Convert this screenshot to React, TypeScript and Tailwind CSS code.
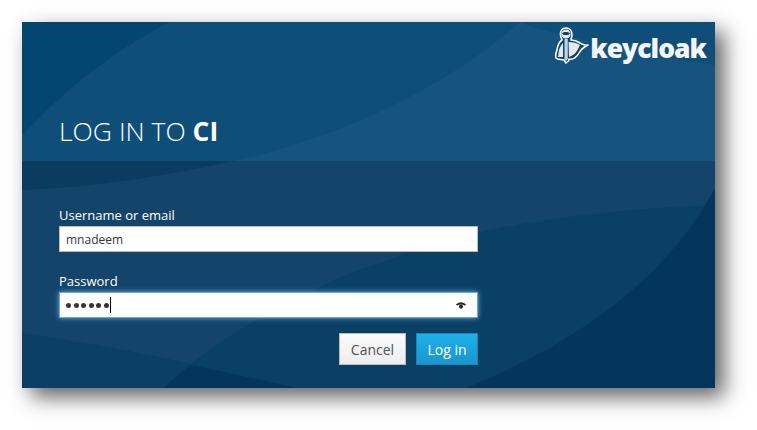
export default function App() {
  return (
    <div className="w-[757px] h-[430px] bg-white pl-[22px] pt-[22px] overflow-hidden" style={{ fontFamily: '"Open Sans", sans-serif' }}>
      <div className="relative w-[693px] h-[366px] bg-[#03466f] shadow-[9px_9px_20px_rgba(0,0,0,0.62)]">
        <svg className="absolute inset-0" width="693" height="366" viewBox="22 22 693 366">
          <rect x="22" y="22" width="693" height="139" fill="#03466f" />
          <path d="M22 135 C70 85 115 50 170 22 L715 22 L715 161 L22 161 Z" fill="#0e4e79" />
          <path d="M300 143 C385 115 460 75 520 22 L535 28 C590 42 650 57 715 65 L715 161 L233 161 C258 156 280 150 300 143 Z" fill="#17537f" />
          <rect x="22" y="161" width="693" height="227" fill="#0a3c5f" />
          <path d="M22 190 C100 187 170 175 233 161 L715 161 L715 388 L22 388 Z" fill="#14446a" />
          <path d="M163 388 C215 340 270 310 315 290 C350 270 380 265 408 252 C440 240 470 237 480 232 C540 218 640 207 715 205 L715 388 Z" fill="#0a4063" />
          <path d="M22 333 C110 345 200 365 297 388 L22 388 Z" fill="#0b4064" />
          <path d="M163 388 L190 365 C225 372 260 380 297 388 Z" fill="#03365a" />
          <path d="M466 388 C560 350 660 290 715 188 L715 388 Z" fill="#03365a" />
        </svg>

        <div className="relative flex flex-col h-full">
          <header className="flex flex-col h-[139px] pl-[37px]">
            <div className="flex justify-end items-start h-[50px] pr-[9px] pt-[4px]">
              <svg width="38" height="38" viewBox="2 2 36 38">
                <path d="M15 4 C11 4 9 7 9.5 11 C10 14 11 15 11 16 C8 18 6.5 22 6 26 C5 29 4 31 5 34 C7 36 10 35 13 36 L15 39 L17.5 37 L18 35 C22 36 26 33 28 29 C30 25 33 23 37 21 C33 22 31 20 29 19 C26 17 23 16 20 16 C20 14 21 13 21 11 C21 7 19 4 15 4 Z" fill="#0d4468" stroke="#ffffff" strokeWidth="1.6" strokeLinejoin="round" />
                <path d="M17.5 18 C22 18 26 19 29 21 C27 25 25 31 18 33 Z" fill="#e4e8eb" />
                <path d="M8 26 C9 23 10 21 12 19 L12 33 L7 33 Z" fill="#e4e8eb" />
                <circle cx="15" cy="10" r="4.6" fill="#e4e9ec" />
                <path d="M11 9 C13 7.5 17 7.5 19 9 L17.5 11 L12.5 11 Z" fill="#0d4468" />
                <path d="M13.5 15 L16.8 15 L16.8 35 L15 37 L13.5 35 Z" fill="#b9d3e4" />
              </svg>
              <span className="text-[26.5px] leading-[40px] mt-[2px] font-extrabold text-[#f4f5f6] tracking-[-1px]">keycloak</span>
            </div>
            <h1 className="mt-[42px] text-[26.5px] leading-[34px] font-light text-white uppercase">
              Log in to <strong className="font-bold">CI</strong>
            </h1>
          </header>

          <form className="flex flex-col w-[456px] pl-[37px] pt-[44px]">
            <label className="text-[13px] leading-[20px] text-white mb-px">Username or email</label>
            <div className="flex items-center h-[26px] bg-white border border-[#bbbbbb] px-[6px] pt-px text-[12px] text-[#363636]">mnadeem</div>

            <label className="mt-[19px] text-[13px] leading-[20px] text-white mb-px">Password</label>
            <div className="relative flex items-center h-[26px] bg-white border border-[#66a8dc] pl-[6px] pr-[10px] shadow-[0_0_5px_rgba(122,190,240,0.9)] text-[#363636]">
              <span className="flex gap-[2.5px]">
                {[0, 1, 2, 3, 4, 5].map((i) => (
                  <span key={i} className="w-[5px] h-[5px] rounded-full bg-[#363636]" />
                ))}
              </span>
              <span className="w-px h-[16px] bg-black ml-[1.5px]" />
              <svg className="ml-auto" width="12" height="8" viewBox="0 0 12 8">
                <path d="M0.8 3.8 C3.5 0.4 8.5 0.4 11.2 3.8 L9.6 4.6 C7.5 3 4.5 3 2.4 4.6 Z" fill="#2b2b2b" />
                <circle cx="6" cy="5.6" r="2.1" fill="#2b2b2b" />
              </svg>
            </div>

            <div className="flex justify-end gap-[10px] mt-[15px]">
              <button type="button" className="w-[67px] h-[32px] border border-[#bbbbbb] bg-gradient-to-b from-[#fafafa] to-[#ededed] text-[14px] font-medium text-[#4d5258]">Cancel</button>
              <button type="button" className="w-[62px] h-[32px] border border-[#1c84b5] bg-gradient-to-b from-[#1eb1ea] to-[#1a95cd] text-[14px] font-medium text-white">Log in</button>
            </div>
          </form>
        </div>
      </div>
    </div>
  );
}
